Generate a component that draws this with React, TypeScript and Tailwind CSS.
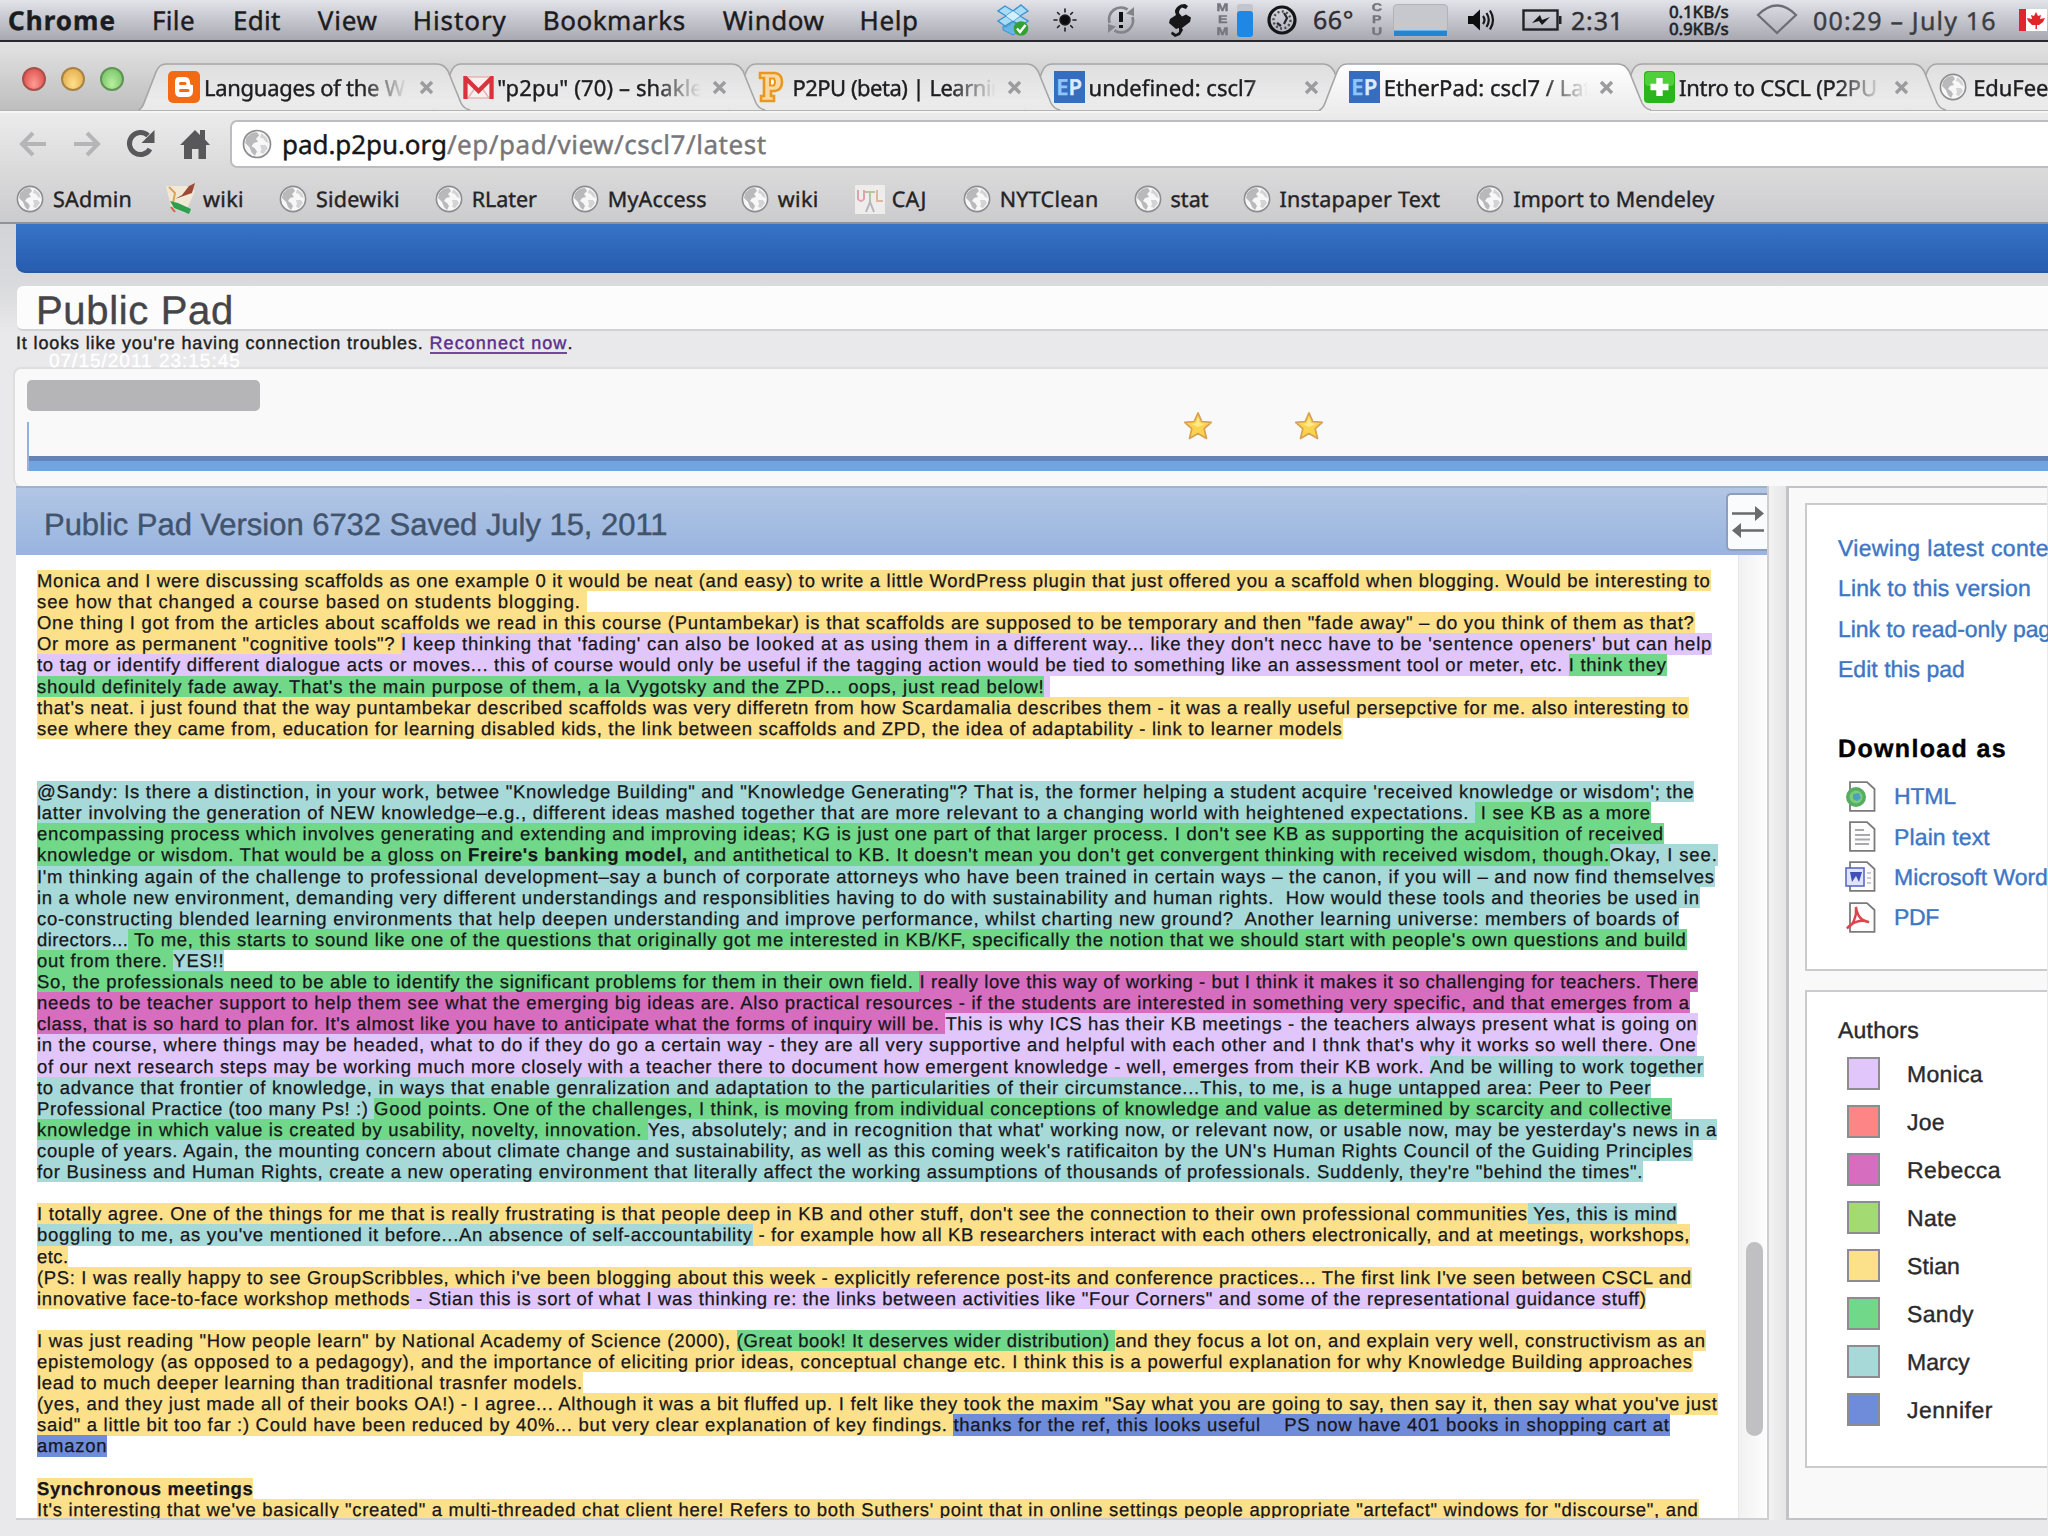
import { useLayoutEffect, useRef, type ReactNode } from "react";
import clsx from "clsx";

interface FitProps {
  w: number;
  children: string;
  className?: string;
}

// single run of text, tracked so that it takes exactly `w` pixels
function Fit({ w, children, className }: FitProps) {
  const ref = useRef<HTMLSpanElement>(null);

  useLayoutEffect(() => {
    const el = ref.current;
    if (!el) return;
    el.style.letterSpacing = "0.01px";
    const natural = el.getBoundingClientRect().width;
    el.style.letterSpacing = `${(w - natural) / children.length}px`;
  }, [w, children]);

  return (
    <span ref={ref} className={clsx("inline-block shrink-0 whitespace-pre", className)}>
      {children}
    </span>
  );
}

/* ---------- icons ---------- */

function Globe({ className }: { className?: string }) {
  return (
    <svg viewBox="0 0 28 28" className={clsx("shrink-0", className)}>
      <circle cx="14" cy="14" r="12.6" fill="#f7f7f7" stroke="#8d8d8f" strokeWidth="1.6" />
      <path d="M4 8 L9 3.5 L14 3 L16 6 L13 9 L15 12 L11 13 L9 16 L12 18 L14 21 L12 25 L9 22 L7 17 L3 13 Z" fill="#b9b9bb" />
      <path d="M18 4 L23 8 L25 13 L22 12 L20 9 L17 8 Z M17 15 L22 15 L24 18 L20 23 L17 22 L18 19 Z" fill="#d3d3d5" />
    </svg>
  );
}

function DropboxIcon() {
  return (
    <svg viewBox="0 0 32 32" className="h-8 w-8 shrink-0">
      <path d="M8 2 L16 7 L9 12 L1 7 Z M24 1 L31 7 L23 12 L16 7 Z M9 12 L16 17 L8 22 L1 17 Z M23 12 L31 17 L24 22 L16 17 Z" fill="#a9dcf7" stroke="#3c93cf" strokeWidth="1.4" />
      <path d="M6 22 L9 23 L16 18 L23 23 L26 22 L26 26 L16 31 L6 26 Z" fill="#66b5e6" stroke="#3c93cf" strokeWidth="1" />
      <path d="M16 7 L23 12 L16 17 L9 12 Z" fill="#d3effc" />
      <circle cx="24" cy="24.500" r="7.300" fill="#35a135" />
      <path d="M20 24.500 L23 28 L28.500 21" stroke="#fff" strokeWidth="2.400" fill="none" />
    </svg>
  );
}

function SunIcon() {
  return (
    <svg viewBox="0 0 24 24" className="h-6 w-6 shrink-0" stroke="#1e1e22" strokeWidth="1.6" strokeLinecap="round">
      <circle cx="12" cy="12" r="5" fill="#0c0c0e" />
      <path d="M12 1V4M12 20V23M1 12H4M20 12H23M4.500 4.500L6.300 6.300M17.700 17.700L19.500 19.500M4.500 19.500L6.300 17.700M17.700 6.300L19.500 4.500" />
    </svg>
  );
}

function SyncAlertIcon() {
  return (
    <svg viewBox="0 0 30 30" className="h-[30px] w-[30px] shrink-0" fill="none">
      <path d="M3.500 18 A12 12 0 0 1 21.500 4.500 M26.500 12 A12 12 0 0 1 8.500 25.500" stroke="#83848a" strokeWidth="2.800" />
      <path d="M28 2 L28 11 L20 8.500 Z M2 28 L2 19 L10 21.500 Z" fill="#83848a" />
      <path d="M15 7V17M15 20V23" stroke="#111" strokeWidth="4" />
    </svg>
  );
}

function ScriptIcon() {
  return (
    <svg viewBox="0 0 22 33" className="h-[33px] w-[22px] shrink-0">
      <path
        d="M12 0.500 Q6 3 6 8 L7 11 L1 15 L0 19 L7 25 L10 24 L10 28 L7 30 L3 27.500 L2 30 L6 33 L11 31 L14 26 L13 24 L21 18 L22 13.500 L17 10.500 L13 12.500 L10 9 Q10 5 13 3.500 L17 5 L19 2 L16 0 Z"
        fill="#17171a"
      />
    </svg>
  );
}

function ClockIcon() {
  return (
    <svg viewBox="0 0 30 30" className="h-[30px] w-[30px] shrink-0" fill="none">
      <circle cx="15" cy="15" r="13" stroke="#141417" strokeWidth="3.200" />
      <circle cx="15" cy="15" r="8.500" stroke="#4a4a50" strokeWidth="2.400" strokeDasharray="2 2.400" />
      <path d="M17 8 L20 13 L17 19 M10 18 L14 21" stroke="#26262b" strokeWidth="2.200" />
    </svg>
  );
}

function SpeakerIcon() {
  return (
    <svg viewBox="0 0 28 24" className="h-6 w-7 shrink-0" fill="none" stroke="#17171a" strokeWidth="2.200">
      <path d="M1 8 H6 L13 1.500 V22.500 L6 16 H1 Z" fill="#0d0d10" stroke="none" />
      <path d="M16 8 Q19 12 16 16 M19.500 5 Q24 12 19.500 19 M23 2.500 Q29 12 23 21.500" />
    </svg>
  );
}

function BatteryIcon() {
  return (
    <svg viewBox="0 0 40 22" className="h-[22px] w-10 shrink-0">
      <rect x="1.500" y="1.500" width="34" height="19" fill="none" stroke="#222226" strokeWidth="2.400" />
      <path d="M37 7 H39.500 V15 H37 Z" fill="#222226" />
      <path d="M10 14 L18 6 L20 11 L28 8 L20 16 L17 12 Z" fill="#17171a" />
    </svg>
  );
}

function WifiIcon() {
  return (
    <svg viewBox="0 0 42 32" className="h-8 w-[42px] shrink-0">
      <path d="M2 11 Q21 -8 40 11 L21 29 Z" fill="none" stroke="#6d6e75" strokeWidth="2.200" />
    </svg>
  );
}

function FlagIcon() {
  return (
    <svg viewBox="0 0 28 22" className="h-[22px] w-7 shrink-0">
      <rect width="44" height="22" fill="#fff" />
      <rect width="7" height="22" fill="#e0262b" />
      <path d="M17 3 L19 7 L22 6 L21 10 L26 9 L24 13 L20 16 H18 V20 H16.500 V16 H13 L9 12 L8 9 L13 10 L12 6 L15 7 Z" fill="#e0262b" />
    </svg>
  );
}

function BloggerIcon() {
  return (
    <svg viewBox="0 0 32 32" className="h-8 w-8 shrink-0">
      <rect width="32" height="32" rx="5" fill="#f26a14" />
      <path d="M11 6 H17 Q22 6 22 12 Q22 14 25 14 V20 Q25 26 19 26 H12 Q7 26 7 20 V11 Q7 6 11 6 Z" fill="#fff" />
      <path d="M12.500 12.500 H17 M12.500 19.500 H20" stroke="#f26a14" strokeWidth="3" strokeLinecap="round" />
    </svg>
  );
}

function GmailIcon() {
  return (
    <svg viewBox="0 0 31 23" className="h-[23px] w-[31px] shrink-0">
      <rect x="1" y="1" width="29" height="21" fill="#fbeeee" stroke="#e39a9a" />
      <path d="M5 22 L12 12 M26 22 L19 12" stroke="#e8b4b4" strokeWidth="1.500" />
      <path d="M2.500 23 V2 L15.500 15 L28.500 2 V23" fill="none" stroke="#d8323d" strokeWidth="4.200" />
    </svg>
  );
}

function P2puIcon() {
  return (
    <svg viewBox="0 0 26 32" className="h-8 w-[26px] shrink-0">
      <path d="M2 2 H17 Q24 3 24 11 Q24 19 17 20 H13 V25 H16 V30 H3 V25 H6 V7 H2 Z" fill="#f8d9a6" stroke="#e9981f" strokeWidth="2.600" />
      <path d="M12 7.500 H16 Q18 11 16 14.500 H12 Z" fill="#fff" stroke="#e9981f" strokeWidth="2" />
    </svg>
  );
}

function EtherPadIcon() {
  return (
    <span className="flex h-8 w-[31px] shrink-0 items-center justify-center bg-[#356dc0] font-['Noto_Sans',sans-serif] text-[22px] leading-none font-semibold">
      <span className="text-[#8fc6fb]">E</span>
      <span className="text-[#dcebfd]">P</span>
    </span>
  );
}

function PlusIcon() {
  return (
    <svg viewBox="0 0 31 32" className="h-8 w-[31px] shrink-0">
      <rect width="31" height="32" rx="4" fill="#2cb41b" />
      <rect x="1" y="1" width="29" height="14" rx="4" fill="#4fd03a" />
      <path d="M15.500 7 V25 M6.500 16 H24.500" stroke="#fff" strokeWidth="6.400" />
    </svg>
  );
}

function WikiIcon() {
  return (
    <svg viewBox="0 0 32 32" className="h-8 w-8 shrink-0">
      <path d="M1 3 H22 L30 8 L20 30 L6 24 Z" fill="#f1e9d6" />
      <path d="M4 4 L10 10 L8 20" stroke="#d9a35a" strokeWidth="2" fill="none" />
      <path d="M30 0 L27 10 L10 16 L17 12 L24 3 Z" fill="#9c4a35" />
      <path d="M5 18 L13 20 L26 26 L24 31 L9 25 Z" fill="#2f9e4d" />
      <path d="M6 24 L10 29" stroke="#d8603c" strokeWidth="2" />
    </svg>
  );
}

function CajIcon() {
  return (
    <svg viewBox="0 0 30 29" className="h-[29px] w-[30px] shrink-0" fill="none" strokeWidth="2">
      <rect width="30" height="29" fill="#efecec" />
      <path d="M3 5 V14 Q6 18 9 14 V5" stroke="#e2a0ac" />
      <path d="M10 7 H20 M15 7 V17" stroke="#b6c3a5" />
      <path d="M22 5 V16 H28" stroke="#e0b79c" />
      <path d="M11 27 L15 17 L19 27" stroke="#b3b7bd" />
    </svg>
  );
}

function CloseIcon() {
  return (
    <svg viewBox="0 0 15 15" className="h-[15px] w-[15px] shrink-0">
      <path d="M2 2 L13 13 M13 2 L2 13" stroke="#9c9c9e" strokeWidth="3.400" />
    </svg>
  );
}

function StarIcon() {
  return (
    <svg viewBox="0 0 30 30" className="h-[30px] w-[30px] shrink-0">
      <path d="M15 1.800 L18.800 10.500 L28.300 11.400 L21.200 17.700 L23.500 27.500 L15 22.500 L6.500 27.500 L8.800 17.700 L1.700 11.400 L11.200 10.500 Z" fill="#fbd34f" stroke="#d8a24e" strokeWidth="1.700" strokeLinejoin="round" />
      <path d="M15 6 L17 12 L22 13 L15 16 L9 13 L13 12 Z" fill="#fde98c" />
    </svg>
  );
}

/* ---------- menu bar ---------- */

const MENUS = [
  { label: "File", w: 43, gap: "ml-[36px]" },
  { label: "Edit", w: 48, gap: "ml-[38px]" },
  { label: "View", w: 60, gap: "ml-[37px]" },
  { label: "History", w: 94, gap: "ml-[35px]" },
  { label: "Bookmarks", w: 143, gap: "ml-[36px]" },
  { label: "Window", w: 102, gap: "ml-[37px]" },
  { label: "Help", w: 59, gap: "ml-[35px]" },
];

function VerticalLabel({ text, className }: { text: string; className: string }) {
  return (
    <span className={clsx("flex w-[14px] shrink-0 flex-col items-center font-['Liberation_Sans',Arial,sans-serif] text-[11px] leading-[12px] font-bold text-[#75767d]", className)}>
      {text.split("").map((c, i) => (
        <span key={i} className="scale-x-130">{c}</span>
      ))}
    </span>
  );
}

function MenuBar() {
  return (
    <div className="flex h-[42px] items-center border-b-[2px] border-[#2a2a2e] bg-gradient-to-b from-[#e3e4ea] to-[#a7a8b1] text-[26px] leading-[40px] text-[#1c1c20]">
      <div className="flex w-[997px] shrink-0 pl-[8px]">
        <Fit w={108} className="font-bold">Chrome</Fit>
        {MENUS.map((m) => (
          <Fit key={m.label} w={m.w} className={m.gap}>
            {m.label}
          </Fit>
        ))}
      </div>
      <DropboxIcon />
      <div className="ml-[24px] flex"><SunIcon /></div>
      <div className="ml-[29px] flex"><SyncAlertIcon /></div>
      <div className="ml-[33px] flex"><ScriptIcon /></div>
      <VerticalLabel text="MEM" className="ml-[25px]" />
      <div className="ml-[7px] flex h-[33px] w-4 shrink-0 flex-col rounded-[3px] bg-[#c3c5cd] pt-[7px]">
        <div className="flex-1 rounded-[3px] bg-[#1f87e4]" />
      </div>
      <div className="ml-[14px] flex"><ClockIcon /></div>
      <Fit w={41} className="ml-[16px] text-[25px] text-[#2d2d32]">66°</Fit>
      <VerticalLabel text="CPU" className="ml-[16px]" />
      <div className="ml-[9px] flex h-[33px] w-[55px] shrink-0 flex-col justify-end rounded-[4px] border border-[#b2b3ba] bg-[#c6c8cd]">
        <div className="h-[6px] border-t border-[#6ab2ea] bg-[#2585d0]" />
      </div>
      <div className="ml-[19px] flex"><SpeakerIcon /></div>
      <div className="ml-[27px] flex"><BatteryIcon /></div>
      <Fit w={53} className="ml-[9px] pt-[1px] text-[25px] text-[#2d2d32]">2:31</Fit>
      <div className="ml-[45px] flex w-[70px] shrink-0 flex-col text-[17px] leading-[17px] font-medium text-[#222226]">
        <Fit w={69}>0.1KB/s</Fit>
        <Fit w={69}>0.9KB/s</Fit>
      </div>
      <div className="ml-[17px] flex"><WifiIcon /></div>
      <Fit w={184} className="ml-[15px] pt-[1px] text-[25px] text-[#3c3d43]">00:29 – July 16</Fit>
      <div className="ml-[22px] flex"><FlagIcon /></div>
    </div>
  );
}

/* ---------- tabs ---------- */

interface TabInfo {
  icon: ReactNode;
  title: string;
  w: number;
  pad: string;
  z: string;
  active?: boolean;
}

const TABS: TabInfo[] = [
  { icon: <BloggerIcon />, title: "Languages of the W", w: 201, pad: "w-[36px]", z: "z-[7]" },
  { icon: <GmailIcon />, title: '"p2pu" (70) – shakle', w: 206, pad: "w-[34px]", z: "z-[6]" },
  { icon: <P2puIcon />, title: "P2PU (beta) | Learnin", w: 212, pad: "w-[34px]", z: "z-[5]" },
  { icon: <EtherPadIcon />, title: "undefined: cscl7", w: 168, pad: "w-[35px]", z: "z-[4]" },
  { icon: <EtherPadIcon />, title: "EtherPad: cscl7 / Lat", w: 208, pad: "w-[35px]", z: "z-[8]", active: true },
  { icon: <PlusIcon />, title: "Intro to CSCL (P2PU", w: 198, pad: "w-[35px]", z: "z-[2]" },
  { icon: <Globe className="h-7 w-7" />, title: "EduFeedr", w: 98, pad: "w-[34px]", z: "z-[1]" },
];

function Tab({ tab }: { tab: TabInfo }) {
  return (
    <div className={clsx("relative h-[47px] w-[295.200px] shrink-0", tab.z)}>
      <svg viewBox="0 0 334 50" className="absolute top-0 left-0 h-[50px] w-[334px]">
        <defs>
          <linearGradient id={tab.active ? "tab-on" : "tab-off"} x1="0" y1="0" x2="0" y2="1">
            <stop offset="0" stopColor={tab.active ? "#ffffff" : "#dfdfdf"} />
            <stop offset="0.8" stopColor={tab.active ? "#f0f0f0" : "#ebebeb"} />
            <stop offset="1" stopColor={tab.active ? "#ececec" : "#e9e9e9"} />
          </linearGradient>
        </defs>
        <path
          d="M0 47 Q4 46 6 40 L18 9 Q21 1 28 1 H299 Q306 1 310 8 L323 40 Q326 46 332 47"
          fill={tab.active ? "url(#tab-on)" : "url(#tab-off)"}
          stroke="#a5a5a7"
          strokeWidth="1.6"
        />
        {tab.active && <path d="M2 48.500 H331" stroke="#eeeeee" strokeWidth="3" />}
      </svg>
      <div className="relative flex h-[48px] items-center pl-[30px]">
        <span className={clsx("flex shrink-0", tab.pad)}>{tab.icon}</span>
        <span className="w-[208px] shrink-0 overflow-hidden pt-[2px] [mask-image:linear-gradient(to_right,#000_76%,transparent_98%)]">
          <Fit w={tab.w}>{tab.title}</Fit>
        </span>
        <span className="ml-[7px]">
          <CloseIcon />
        </span>
      </div>
    </div>
  );
}

function TabStrip() {
  return (
    <div className="flex h-[69px] items-end border-b border-[#b3b3b5] bg-gradient-to-b from-[#e4e3e4] to-[#bebebf] text-[22px] leading-[34px] text-[#1d1d20]">
      <div className="flex w-[138px] shrink-0 gap-[15px] self-start pt-[25px] pl-[22px]">
        <span className="h-6 w-6 rounded-full border-2 border-[#a8504c] bg-radial-[at_50%_75%] from-[#ff9c94] to-[#d6403f]" />
        <span className="h-6 w-6 rounded-full border-2 border-[#a98344] bg-radial-[at_50%_75%] from-[#ffe08c] to-[#dea23e]" />
        <span className="h-6 w-6 rounded-full border-2 border-[#5f9452] bg-radial-[at_50%_75%] from-[#b9f0a0] to-[#6bbb5c]" />
      </div>
      {TABS.map((t) => (
        <Tab key={t.title} tab={t} />
      ))}
    </div>
  );
}

/* ---------- toolbar ---------- */

function Toolbar() {
  return (
    <div className="flex h-[62px] items-center border-t-2 border-[#f6f6f6] pt-[1px]">
      <div className="flex w-[230px] shrink-0 items-center pl-[19px]">
        <svg viewBox="0 0 28 26" className="h-[26px] w-7" fill="none" stroke="#b5b5b7" strokeWidth="4">
          <path d="M2 13 H27 M14 2 L3 13 L14 24" />
        </svg>
        <svg viewBox="0 0 28 26" className="ml-[26px] h-[26px] w-7" fill="none" stroke="#b5b5b7" strokeWidth="4">
          <path d="M1 13 H26 M14 2 L25 13 L14 24" />
        </svg>
        <svg viewBox="0 0 29 30" className="ml-[25px] h-[30px] w-[29px]" fill="none">
          <path d="M24 20 A11 11 0 1 1 22 6.500" stroke="#58585b" strokeWidth="5" />
          <path d="M28.500 1 V14 H15.500 Z" fill="#58585b" />
        </svg>
        <svg viewBox="0 0 30 30" className="ml-[25px] h-[30px] w-[30px]">
          <path d="M15 1 L20 6 V1 H25 V10.500 L30 16 H26 V30 H18.500 V20 H12 V30 H4 V16 H0 Z" fill="#58585b" />
        </svg>
      </div>
      <div className="flex h-[48px] flex-1 items-center rounded-l-[7px] border-2 border-r-0 border-[#bdbdbf] bg-white pl-[10px] text-[26px] leading-[40px]">
        <Globe className="h-[30px] w-[30px]" />
        <Fit w={165} className="ml-[10px] text-[#161618]">pad.p2pu.org</Fit>
        <Fit w={320} className="text-[#77777a]">/ep/pad/view/cscl7/latest</Fit>
      </div>
    </div>
  );
}

const BOOKMARKS: { label: string; w: number; gap: string; icon?: ReactNode; iconGap?: string }[] = [
  { label: "SAdmin", w: 79, gap: "ml-[16px]" },
  { label: "wiki", w: 41, gap: "ml-[33px]", icon: <WikiIcon />, iconGap: "w-[38px]" },
  { label: "Sidewiki", w: 84, gap: "ml-[35px]" },
  { label: "RLater", w: 65, gap: "ml-[35px]" },
  { label: "MyAccess", w: 99, gap: "ml-[34px]" },
  { label: "wiki", w: 41, gap: "ml-[34px]" },
  { label: "CAJ", w: 35, gap: "ml-[36px]", icon: <CajIcon /> },
  { label: "NYTClean", w: 99, gap: "ml-[36px]" },
  { label: "stat", w: 38, gap: "ml-[35px]" },
  { label: "Instapaper Text", w: 161, gap: "ml-[34px]" },
  { label: "Import to Mendeley", w: 201, gap: "ml-[36px]" },
];

function BookmarksBar() {
  return (
    <div className="flex h-[51px] items-center border-b-[2px] border-[#8f9298] pt-[3px] text-[21.500px] leading-[36px] text-[#232326]">
      {BOOKMARKS.map((b, i) => (
        <div key={i} className={clsx("flex shrink-0 items-center", b.gap)}>
          <span className={clsx("flex shrink-0", b.iconGap ?? "w-[37px]")}>
            {b.icon ?? <Globe className="h-7 w-7" />}
          </span>
          <Fit w={b.w} className="pt-[1px]">{b.label}</Fit>
        </div>
      ))}
    </div>
  );
}

/* ---------- pad text ---------- */

type Author = "monica" | "joe" | "rebecca" | "nate" | "stian" | "sandy" | "marcy" | "jennifer";

const COLORS: Record<Author, string> = {
  monica: "bg-[#e0c6fb]",
  joe: "bg-[#fd8585]",
  rebecca: "bg-[#d76dbf]",
  nate: "bg-[#a4da72]",
  stian: "bg-[#fde08a]",
  sandy: "bg-[#71d88a]",
  marcy: "bg-[#a6d9d7]",
  jennifer: "bg-[#6f8cda]",
};

// [author, text, right edge, bold]
type Run = [Author, string, number, boolean?];

const LEFT = 36.5;

const LINES: Run[][] = [
  [["stian", "Monica and I were discussing scaffolds as one example 0 it would be neat (and easy) to write a little WordPress plugin that just offered you a scaffold when blogging. Would be interesting to", 1712]],
  [["stian", "see how that changed a course based on students blogging. ", 587]],
  [["stian", 'One thing I got from the articles about scaffolds we read in this course (Puntambekar) is that scaffolds are supposed to be temporary and then "fade away" – do you think of them as that?', 1696]],
  [
    ["stian", 'Or more as permanent "cognitive tools"? ', 401],
    ["monica", "I keep thinking that 'fading' can also be looked at as using them in a different way... like they don't necc have to be 'sentence openers' but can help", 1713.5],
  ],
  [
    ["monica", "to tag or identify different dialogue acts or moves... this of course would only be useful if the tagging action would be tied to something like an assessment tool or meter, etc. ", 1570],
    ["sandy", "I think they", 1668],
  ],
  [
    ["sandy", "should definitely fade away. That's the main purpose of them, a la Vygotsky and the ZPD... oops, just read below!", 1045],
    ["monica", " ", 1051],
  ],
  [["stian", "that's neat. i just found that the way puntambekar described scaffolds was very differetn from how Scardamalia describes them - it was a really useful persepctive for me. also interesting to", 1690]],
  [["stian", "see where they came from, education for learning disabled kids, the link between scaffolds and ZPD, the idea of adaptability - link to learner models", 1343.5]],
  [],
  [],
  [["marcy", "@Sandy: Is there a distinction, in your work, betwee \"Knowledge Building\" and \"Knowledge Generating\"? That is, the former helping a student acquire 'received knowledge or wisdom'; the", 1695.5]],
  [
    ["marcy", "latter involving the generation of NEW knowledge–e.g., different ideas mashed together that are more relevant to a changing world with heightened expectations. ", 1476],
    ["sandy", " I see KB as a more", 1652],
  ],
  [["sandy", "encompassing process which involves generating and extending and improving ideas; KG is just one part of that larger process. I don't see KB as supporting the acquisition of received", 1665]],
  [
    ["sandy", "knowledge or wisdom. That would be a gloss on ", 468],
    ["sandy", "Freire's banking model,", 688, true],
    ["sandy", " and antithetical to KB. It doesn't mean you don't get convergent thinking with received wisdom, though.", 1611],
    ["marcy", "Okay, I see.", 1719],
  ],
  [["marcy", "I'm thinking again of the challenge to professional development–say a bunch of corporate attorneys who have been trained in certain ways – the canon, if you will – and now find themselves", 1716]],
  [["marcy", "in a whole new environment, demanding very different understandings and responsiblities having to do with sustainability and human rights.  How would these tools and theories be used in", 1701]],
  [["marcy", "co-constructing blended learning environments that help deepen understanding and improve performance, whilst charting new ground?  Another learning universe: members of boards of", 1680.5]],
  [
    ["marcy", "directors...", 128],
    ["sandy", " To me, this starts to sound like one of the questions that originally got me interested in KB/KF, specifically the notion that we should start with people's own questions and build", 1688],
  ],
  [
    ["sandy", "out from there. ", 173],
    ["marcy", "YES!!", 224],
  ],
  [
    ["sandy", "So, the professionals need to be able to identify the significant problems for them in their own field. ", 920],
    ["rebecca", "I really love this way of working - but I think it makes it so challenging for teachers. There", 1699.5],
  ],
  [["rebecca", "needs to be teacher support to help them see what the emerging big ideas are. Also practical resources - if the students are interested in something very specific, and that emerges from a", 1691]],
  [
    ["rebecca", "class, that is so hard to plan for. It's almost like you have to anticipate what the forms of inquiry will be. ", 946],
    ["monica", "This is why ICS has their KB meetings - the teachers always present what is going on", 1699],
  ],
  [["monica", "in the course, where things may be headed, what to do if they do go a certain way - they are all very supportive and helpful with each other and I thnk that's why it works so well there. One", 1698]],
  [
    ["monica", "of our next research steps may be working much more closely with a teacher there to document how emergent knowledge - well, emerges from their KB work. ", 1431],
    ["marcy", "And be willing to work together", 1705],
  ],
  [["marcy", "to advance that frontier of knowledge, in ways that enable genralization and adaptation to the particularities of their circumstance...This, to me, is a huge untapped area: Peer to Peer", 1652.5]],
  [
    ["marcy", "Professional Practice (too many Ps! :) ", 374],
    ["sandy", "Good points. One of the challenges, I think, is moving from individual conceptions of knowledge and value as determined by scarcity and collective", 1673],
  ],
  [
    ["sandy", "knowledge in which value is created by usability, novelty, innovation. ", 648],
    ["marcy", "Yes, absolutely; and in recognition that what' working now, or relevant now, or usable now, may be yesterday's news in a", 1718.5],
  ],
  [["marcy", "couple of years. Again, the mounting concern about climate change and sustainability, as well as this coming week's ratificaiton by the UN's Human Rights Council of the Guiding Principles", 1694]],
  [["marcy", "for Business and Human Rights, create a new operating environment that literally affect the working assumptions of thousands of professionals. Suddenly, they're \"behind the times\".", 1644.5]],
  [],
  [
    ["stian", "I totally agree. One of the things for me that is really frustrating is that people deep in KB and other stuff, don't see the connection to their own professional communities", 1529],
    ["marcy", " Yes, this is mind", 1678.5],
  ],
  [
    ["marcy", "boggling to me, as you've mentioned it before...An absence of self-accountability", 753],
    ["stian", " - for example how all KB researchers interact with each others electronically, and at meetings, workshops,", 1691.5],
  ],
  [["stian", "etc.", 68]],
  [["stian", "(PS: I was really happy to see GroupScribbles, which i've been blogging about this week - explicitly reference post-its and conference practices... The first link I've seen between CSCL and", 1693]],
  [
    ["stian", "innovative face-to-face workshop methods", 410],
    ["monica", ' - Stian this is sort of what I was thinking re: the links between activities like "Four Corners" and some of the representational guidance stuff', 1641],
    ["stian", ")", 1647],
  ],
  [],
  [
    ["stian", 'I was just reading "How people learn" by National Academy of Science (2000), ', 737],
    ["sandy", "(Great book! It deserves wider distribution) ", 1116],
    ["stian", "and they focus a lot on, and explain very well, constructivism as an", 1707],
  ],
  [["stian", "epistemology (as opposed to a pedagogy), and the importance of eliciting prior ideas, conceptual change etc. I think this is a powerful explanation for why Knowledge Building approaches", 1694]],
  [["stian", "lead to much deeper learning than traditional trasnfer models.", 583]],
  [["stian", "(yes, and they just made all of their books OA!) - I agree... Although it was a bit fluffed up. I felt like they took the maxim \"Say what you are going to say, then say it, then say what you've just", 1719]],
  [
    ["stian", 'said" a little bit too far :) Could have been reduced by 40%... but very clear explanation of key findings. ', 954],
    ["jennifer", "thanks for the ref, this looks useful    PS now have 401 books in shopping cart at", 1671],
  ],
  [["jennifer", "amazon", 107]],
  [],
  [["stian", "Synchronous meetings", 253, true]],
  [["stian", "It's interesting that we've basically \"created\" a multi-threaded chat client here! Refers to both Suthers' point that in online settings people appropriate \"artefact\" windows for \"discourse\", and", 1700]],
];

function PadText() {
  return (
    <div className="h-[963px] overflow-hidden pt-[15px] pl-[21px] text-[18.500px] leading-[22px] text-[#16161a] [-webkit-text-stroke-width:0.25px]">
      {LINES.map((runs, i) => (
        <div key={i} className="flex h-[21.120px]">
          {runs.map(([author, text, right, bold], j) => (
            <Fit
              key={j}
              w={right - (j ? runs[j - 1][2] : LEFT)}
              className={clsx("h-[21.330px]", COLORS[author], bold && "font-bold")}
            >
              {text}
            </Fit>
          ))}
        </div>
      ))}
    </div>
  );
}

/* ---------- side panel ---------- */

function PageShape({ children }: { children?: ReactNode }) {
  return (
    <svg viewBox="0 0 31 31" className="h-[31px] w-[31px] shrink-0">
      <path d="M5 1.200 H22 L29.500 8 V29.800 H5 Z" fill="#fdfdfd" stroke="#7b7b7e" strokeWidth="1.800" />
      {children}
    </svg>
  );
}

const LINKS = [
  { label: "Viewing latest content", w: 231 },
  { label: "Link to this version", w: 193 },
  { label: "Link to read-only page", w: 226 },
  { label: "Edit this pad", w: 127 },
];

const DOWNLOADS = [
  {
    label: "HTML",
    w: 62,
    icon: (
      <PageShape>
        <circle cx="11" cy="16" r="10" fill="#55ad62" />
        <circle cx="11" cy="16" r="6.500" fill="#7ecb7a" />
        <path d="M8 13 L14 12 L16 17 L12 20 L8 18 Z" fill="#4a9fc4" />
      </PageShape>
    ),
  },
  {
    label: "Plain text",
    w: 96,
    icon: (
      <PageShape>
        <path d="M10 9 H19 M10 14 H25 M10 18.500 H25 M10 23 H24" stroke="#a9a9ac" strokeWidth="1.800" />
      </PageShape>
    ),
  },
  {
    label: "Microsoft Word",
    w: 154,
    icon: (
      <PageShape>
        <path d="M22 12 H26 M22 17 H26 M22 22 H26" stroke="#b5b8c8" strokeWidth="1.500" />
        <rect x="1" y="7" width="18" height="18" fill="#dfe4fa" stroke="#5a6bc4" strokeWidth="1.600" />
        <path d="M5 11 H17 L14 21 L11 15 L7 21 Z" fill="#3f51b8" />
      </PageShape>
    ),
  },
  {
    label: "PDF",
    w: 45,
    icon: (
      <PageShape>
        <path d="M2 26 C8 24 12 14 11 5 C12 13 16 19 24 20 C16 17 8 20 2 26 Z" fill="none" stroke="#df4350" strokeWidth="2.400" />
      </PageShape>
    ),
  },
];

const AUTHORS: { name: string; key: Author; w: number }[] = [
  { name: "Monica", key: "monica", w: 76 },
  { name: "Joe", key: "joe", w: 38 },
  { name: "Rebecca", key: "rebecca", w: 94 },
  { name: "Nate", key: "nate", w: 50 },
  { name: "Stian", key: "stian", w: 53 },
  { name: "Sandy", key: "sandy", w: 67 },
  { name: "Marcy", key: "marcy", w: 63 },
  { name: "Jennifer", key: "jennifer", w: 86 },
];

function SidePanel() {
  return (
    <div className="w-[261px] shrink-0 border-t-2 border-b-2 border-l-[3px] border-[#c3c3c6] bg-[#f9f9fa] pt-[15px] pl-[16px] text-[23px]">
      <div className="h-[468px] border-2 border-r-0 border-[#cbcbce] bg-white pt-[23px] pl-[31px] text-[#3d76c4]">
        {LINKS.map((l) => (
          <div key={l.label} className="h-[40.300px] leading-[40px]">
            <Fit w={l.w}>{l.label}</Fit>
          </div>
        ))}
        <div className="mt-[37px] h-[50px] text-[25px] leading-[46px] font-bold text-black">
          <Fit w={169}>Download as</Fit>
        </div>
        {DOWNLOADS.map((d) => (
          <div key={d.label} className="flex h-[40.300px] items-center pl-[7px] leading-[40px]">
            {d.icon}
            <Fit w={d.w} className="ml-[18px]">{d.label}</Fit>
          </div>
        ))}
      </div>
      <div className="mt-[19px] h-[478px] border-2 border-r-0 border-[#cbcbce] bg-white pt-[20px] pl-[31px] text-[#2a2a2d]">
        <div className="h-[37px] leading-[37px]">
          <Fit w={81}>Authors</Fit>
        </div>
        {AUTHORS.map((a) => (
          <div key={a.key} className="flex h-[48px] items-center pl-[9px] leading-[40px]">
            <span className={clsx("h-[33px] w-[33px] border-2 border-[#8e8b91]", COLORS[a.key])} />
            <Fit w={a.w} className="ml-[27px] pt-[1px]">{a.name}</Fit>
          </div>
        ))}
      </div>
    </div>
  );
}

/* ---------- page ---------- */

function PadHeader() {
  return (
    <>
      <div className="ml-[16px] h-[49px] rounded-bl-[9px] border-b-2 border-[#2a57a4] bg-gradient-to-b from-[#3673c7] to-[#285db0]" />
      <div className="mt-[13px] ml-[17px] flex h-[45px] items-center rounded-l-[6px] border-b-2 border-[#d2d2d5] bg-[#fcfcfd] pt-[7px] pl-[19px] text-[40px] leading-[45px] text-[#454548]">
        <Fit w={198}>Public Pad</Fit>
      </div>
      <div className="relative flex h-[36px] pl-[16px] text-[18px] leading-[25px] text-[#1e1e22]">
        <Fit w={414}>{"It looks like you're having connection troubles. "}</Fit>
        <Fit w={138} className="h-[23px] border-b-2 border-[#6f4a9c] text-[#5b2d8d]">Reconnect now</Fit>
        <Fit w={5}>.</Fit>
        <div className="absolute top-[19px] left-[49px] h-[18px] overflow-hidden text-[19px] leading-[24px] text-white">
          <Fit w={192}>07/15/2011 23:15:45</Fit>
        </div>
      </div>
    </>
  );
}

function Timeline() {
  return (
    <div className="ml-[13px] h-[119px] rounded-l-[8px] border-2 border-r-0 border-b-0 border-[#dededf] bg-[#f9f9fa] pt-[11px] pl-[12px]">
      <div className="h-[31px] w-[233px] rounded-[5px] bg-[#b5b4b6]" />
      <div className="mt-[11px] flex h-[49px] flex-col border-l-2 border-[#8fb2e2]">
        <div className="flex h-[34px] items-center gap-[81px] pl-[1154px]">
          <div className="-mt-[26px] flex"><StarIcon /></div>
          <div className="-mt-[26px] flex"><StarIcon /></div>
        </div>
        <div className="h-[5px] bg-[#6584b6]" />
        <div className="h-[10px] bg-[#6fa4e5]" />
      </div>
    </div>
  );
}

export default function App() {
  return (
    <div className="flex h-[1536px] w-[2048px] flex-col overflow-hidden bg-[#e9e8ea] font-['Noto_Sans',sans-serif] [text-rendering:geometricPrecision] [-webkit-text-stroke-width:0.4px]">
      <MenuBar />
      <TabStrip />
      <div className="bg-gradient-to-b from-[#ececec] to-[#cbcacc]">
        <Toolbar />
        <BookmarksBar />
      </div>

      <div className="flex flex-1 flex-col bg-[linear-gradient(to_bottom,#d3d4d8_0px,#d9dadd_60px,#e9e8ea_110px)] font-['Liberation_Sans',Arial,sans-serif]">
        <PadHeader />
        <Timeline />

        <div className="flex h-[1034px] pl-[16px]">
          <div className="w-[1753px] border-r-2 border-b-2 border-[#cfcfd2] bg-white">
            <div className="flex h-[69px] items-start border-t-2 border-[#9db2cd] bg-gradient-to-b from-[#b2c6e4] to-[#98b4df]">
              <div className="flex-1 pl-[28px] text-[31px] leading-[74px] text-[#42536c]">
                <Fit w={624}>Public Pad Version 6732 Saved July 15, 2011</Fit>
              </div>
              <div className="mt-[5px] flex h-[58px] w-[41px] items-center justify-center rounded-l-[5px] border-2 border-r-0 border-[#8c9dbd] bg-[#fafbfc]">
                <svg viewBox="0 0 32 36" className="h-9 w-8" fill="#6b6b6e">
                  <path d="M0 8.300 H23 V2 L32 9.500 L23 17 V10.700 H0 Z" />
                  <path d="M32 25.300 H9 V19 L0 26.500 L9 34 V27.700 H32 Z" />
                </svg>
              </div>
            </div>
            <div className="flex">
              <div className="w-[1722px] shrink-0">
                <PadText />
              </div>
              <div className="h-[963px] flex-1 border-l border-[#e6e6e8] bg-gradient-to-r from-[#f1f1f2] to-[#fdfdfd] pt-[687px] pl-[7px]">
                <div className="h-[194px] w-[17px] rounded-full bg-[#c0bfc1]" />
              </div>
            </div>
          </div>
          <div className="w-[17px] shrink-0 bg-gradient-to-r from-[#f2f2f3] to-[#e6e6e7]" />
          <SidePanel />
        </div>
      </div>
    </div>
  );
}
